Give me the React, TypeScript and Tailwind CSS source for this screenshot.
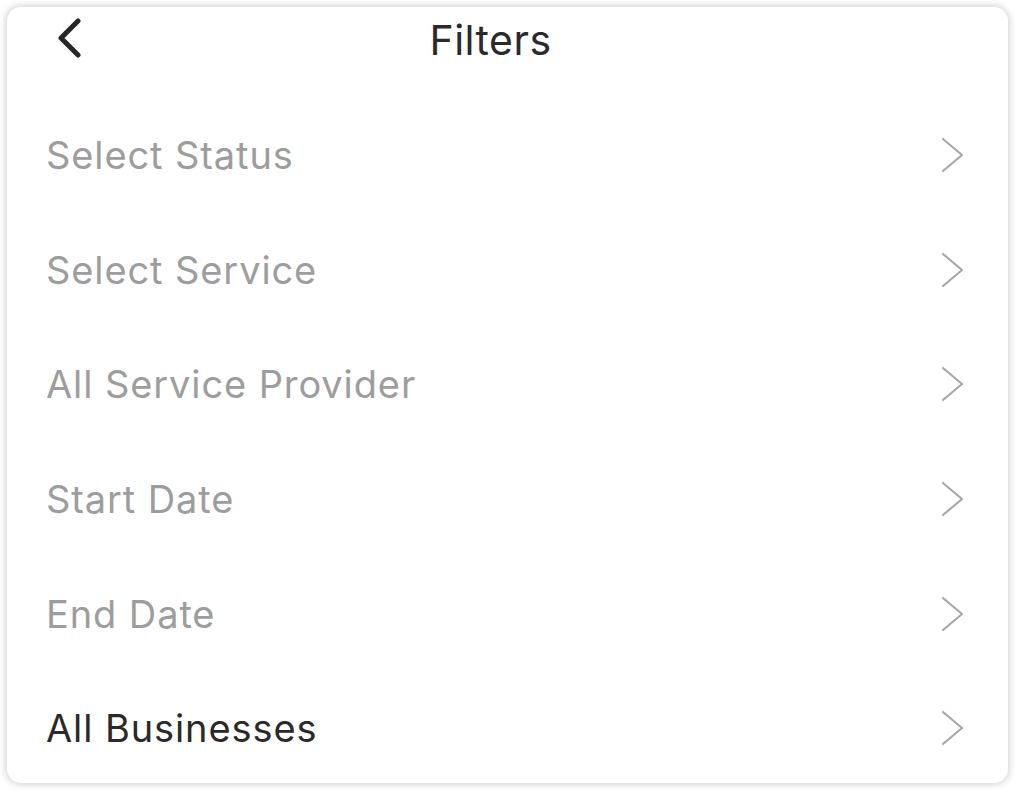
const ROWS: { label: string; active?: boolean }[] = [
  { label: "Select Status" },
  { label: "Select Service" },
  { label: "All Service Provider" },
  { label: "Start Date" },
  { label: "End Date" },
  { label: "All Businesses", active: true },
];

function Chevron() {
  return (
    <svg width="26" height="36" viewBox="0 0 26 36" fill="none" className="shrink-0">
      <path d="M3 2 L22 18 L3 34" stroke="#a8a8a8" strokeWidth="2.2" strokeLinecap="round" strokeLinejoin="round" />
    </svg>
  );
}

export default function App() {
  return (
    <div className="w-[1016px] h-[792px] bg-white p-[7px] font-['Inter','Liberation_Sans',sans-serif]">
      <div className="w-[1001px] h-[776px] rounded-[14px] bg-white shadow-[0_0_6px_2px_rgba(0,0,0,0.16)] flex flex-col overflow-hidden">
        {/* header */}
        <div className="relative h-[91px] shrink-0 flex items-center justify-center">
          <button className="absolute left-[47px] top-[11px] w-[30px] h-[42px] flex items-center justify-center">
            <svg width="28" height="42" viewBox="0 0 28 42" fill="none">
              <path d="M23 3 L6 20 L23 37" stroke="#262626" strokeWidth="5" strokeLinecap="round" strokeLinejoin="round" />
            </svg>
          </button>
          <h1 className="-mt-[25px] -ml-[34px] text-[41px] leading-none text-[#2a2a2a] tracking-[0.5px]">Filters</h1>
        </div>
        {/* rows */}
        <div className="flex flex-col">
          {ROWS.map((r) => (
            <div key={r.label} className="h-[114.6px] flex items-center justify-between pl-[39px] pr-[42px]">
              <span className={`text-[38px] leading-none tracking-[0.9px] ${r.active ? "text-[#2a2a2a]" : "text-[#9d9d9d]"}`}>{r.label}</span>
              <Chevron />
            </div>
          ))}
        </div>
      </div>
    </div>
  );
}
